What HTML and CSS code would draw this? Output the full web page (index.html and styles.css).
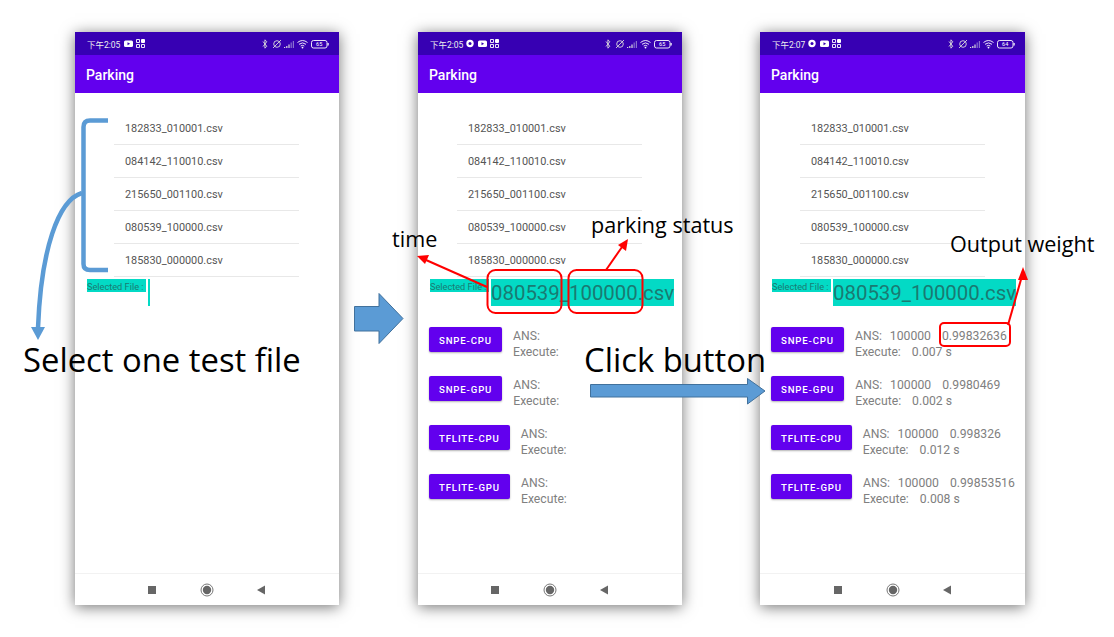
FILE: index.html
```html
<!DOCTYPE html>
<html lang="en">

<head>
    <meta charset="UTF-8">
    <meta name="viewport" content="width=device-width, initial-scale=1.0">
    <title>Parking</title>
    <link rel="stylesheet" href="styles.css">
</head>

<body>

    <div class="slide">

        <!-- first phone: nothing selected -->
        <div class="phone phone-one">
            <div class="status-bar">
                <span class="clock">下午2:05</span>
                <svg class="status-icon" width="23" height="9" viewBox="0 0 23 9">
                    <rect x="1" y="1.5" width="9" height="6.500" rx="1.500" fill="#fff" />
                    <path d="M4.500 3.200v3l2.600-1.500z" fill="#3700b3" />
                    <path d="M13.500 .5h3v3h-3zM13.500 5.500h3v3h-3zM18.500 5.500h3v3h-3z" fill="none" stroke="#fff" stroke-width=".9" />
                    <rect x="18" y="0" width="4" height="4" rx="1" fill="#fff" />
                </svg>
                <svg class="status-right" width="67" height="10" viewBox="0 0 67 10">
                    <path d="M1 2.500l3.800 4.800L2.900 9.200V.8l1.900 1.900L1 7.500" fill="none" stroke="#ddd" stroke-width=".9" />
                    <circle cx="15" cy="5" r="3.300" fill="none" stroke="#ddd" stroke-width=".9" />
                    <path d="M11 9l8-8" stroke="#ddd" stroke-width=".9" />
                    <path d="M22 9h1.200V8H22zM24.200 9h1.200V7h-1.200zM26.400 9h1.200V5.500h-1.200z" fill="#ddd" />
                    <path d="M28.600 9h1.200V3.500h-1.200zM30.800 9H32V2h-1.200z" fill="#8a70d0" />
                    <path d="M35.500 3.500q5-4 10 0M37 5.300q3.500-2.800 7 0M38.700 7q1.800-1.300 3.600 0" fill="none" stroke="#fff" stroke-width=".9" />
                    <circle cx="40.500" cy="8.600" r=".9" fill="#fff" />
                    <rect x="49.500" y="1.500" width="15.500" height="7.500" rx="2" fill="none" stroke="#fff" stroke-width=".9" />
                    <rect x="65.500" y="4" width="1.200" height="2.500" fill="#fff" />
                    <text x="57.200" y="7.300" text-anchor="middle" class="battery-text">65</text>
                </svg>
            </div>
            <div class="app-bar">Parking</div>
            <div class="content">
                <ul class="file-list">
                    <li>182833_010001.csv</li>
                    <li>084142_110010.csv</li>
                    <li>215650_001100.csv</li>
                    <li>080539_100000.csv</li>
                    <li>185830_000000.csv</li>
                </ul>
                <div class="selected-row">
                    <span class="selected-label">Selected File :</span>
                    <span class="selected-value"></span>
                </div>
            </div>
            <div class="nav-bar">
                <svg width="124" height="14" viewBox="0 0 124 14">
                    <rect x="3" y="3" width="8" height="8" fill="#666" />
                    <circle cx="62" cy="7" r="6" fill="none" stroke="#777" stroke-width="1" />
                    <circle cx="62" cy="7" r="4.200" fill="#666" />
                    <path d="M112 7l8-4.500v9z" fill="#666" />
                </svg>
            </div>
        </div>

        <!-- second phone: file selected, no results yet -->
        <div class="phone phone-two">
            <div class="status-bar">
                <span class="clock">下午2:05</span>
                <svg class="status-icon" width="34" height="9" viewBox="0 0 34 9">
                    <circle cx="4" cy="4.500" r="3.700" fill="#fff" />
                    <circle cx="4" cy="4.500" r="1.500" fill="#3700b3" />
                    <rect x="12" y="1.500" width="9" height="6.500" rx="1.500" fill="#fff" />
                    <path d="M15.500 3.200v3l2.600-1.500z" fill="#3700b3" />
                    <path d="M24.500 .5h3v3h-3zM24.500 5.500h3v3h-3zM29.500 5.500h3v3h-3z" fill="none" stroke="#fff" stroke-width=".9" />
                    <rect x="29" y="0" width="4" height="4" rx="1" fill="#fff" />
                </svg>
                <svg class="status-right" width="67" height="10" viewBox="0 0 67 10">
                    <path d="M1 2.500l3.800 4.800L2.900 9.200V.8l1.900 1.900L1 7.500" fill="none" stroke="#ddd" stroke-width=".9" />
                    <circle cx="15" cy="5" r="3.300" fill="none" stroke="#ddd" stroke-width=".9" />
                    <path d="M11 9l8-8" stroke="#ddd" stroke-width=".9" />
                    <path d="M22 9h1.200V8H22zM24.200 9h1.200V7h-1.200zM26.400 9h1.200V5.500h-1.200z" fill="#ddd" />
                    <path d="M28.600 9h1.200V3.500h-1.200zM30.800 9H32V2h-1.200z" fill="#8a70d0" />
                    <path d="M35.500 3.500q5-4 10 0M37 5.300q3.500-2.800 7 0M38.700 7q1.800-1.300 3.600 0" fill="none" stroke="#fff" stroke-width=".9" />
                    <circle cx="40.500" cy="8.600" r=".9" fill="#fff" />
                    <rect x="49.500" y="1.500" width="15.500" height="7.500" rx="2" fill="none" stroke="#fff" stroke-width=".9" />
                    <rect x="65.500" y="4" width="1.200" height="2.500" fill="#fff" />
                    <text x="57.200" y="7.300" text-anchor="middle" class="battery-text">65</text>
                </svg>
            </div>
            <div class="app-bar">Parking</div>
            <div class="content">
                <ul class="file-list">
                    <li>182833_010001.csv</li>
                    <li>084142_110010.csv</li>
                    <li>215650_001100.csv</li>
                    <li>080539_100000.csv</li>
                    <li>185830_000000.csv</li>
                </ul>
                <div class="selected-row">
                    <span class="selected-label">Selected File :</span>
                    <span class="selected-value">080539_100000.csv</span>
                </div>
                <div class="model-list">
                    <div class="model-row">
                        <button class="model-button">SNPE-CPU</button>
                        <div class="model-result">
                            <div>ANS:</div>
                            <div>Execute:</div>
                        </div>
                    </div>
                    <div class="model-row">
                        <button class="model-button">SNPE-GPU</button>
                        <div class="model-result">
                            <div>ANS:</div>
                            <div>Execute:</div>
                        </div>
                    </div>
                    <div class="model-row">
                        <button class="model-button">TFLITE-CPU</button>
                        <div class="model-result">
                            <div>ANS:</div>
                            <div>Execute:</div>
                        </div>
                    </div>
                    <div class="model-row">
                        <button class="model-button">TFLITE-GPU</button>
                        <div class="model-result">
                            <div>ANS:</div>
                            <div>Execute:</div>
                        </div>
                    </div>
                </div>
            </div>
            <div class="nav-bar">
                <svg width="124" height="14" viewBox="0 0 124 14">
                    <rect x="3" y="3" width="8" height="8" fill="#666" />
                    <circle cx="62" cy="7" r="6" fill="none" stroke="#777" stroke-width="1" />
                    <circle cx="62" cy="7" r="4.200" fill="#666" />
                    <path d="M112 7l8-4.500v9z" fill="#666" />
                </svg>
            </div>
        </div>

        <!-- third phone: results filled in -->
        <div class="phone phone-three">
            <div class="status-bar">
                <span class="clock">下午2:07</span>
                <svg class="status-icon" width="34" height="9" viewBox="0 0 34 9">
                    <circle cx="4" cy="4.500" r="3.700" fill="#fff" />
                    <circle cx="4" cy="4.500" r="1.500" fill="#3700b3" />
                    <rect x="12" y="1.500" width="9" height="6.500" rx="1.500" fill="#fff" />
                    <path d="M15.500 3.200v3l2.600-1.500z" fill="#3700b3" />
                    <path d="M24.500 .5h3v3h-3zM24.500 5.500h3v3h-3zM29.500 5.500h3v3h-3z" fill="none" stroke="#fff" stroke-width=".9" />
                    <rect x="29" y="0" width="4" height="4" rx="1" fill="#fff" />
                </svg>
                <svg class="status-right" width="67" height="10" viewBox="0 0 67 10">
                    <path d="M1 2.500l3.800 4.800L2.900 9.200V.8l1.900 1.900L1 7.500" fill="none" stroke="#ddd" stroke-width=".9" />
                    <circle cx="15" cy="5" r="3.300" fill="none" stroke="#ddd" stroke-width=".9" />
                    <path d="M11 9l8-8" stroke="#ddd" stroke-width=".9" />
                    <path d="M22 9h1.200V8H22zM24.200 9h1.200V7h-1.200zM26.400 9h1.200V5.500h-1.200z" fill="#ddd" />
                    <path d="M28.600 9h1.200V3.500h-1.200zM30.800 9H32V2h-1.200z" fill="#8a70d0" />
                    <path d="M35.500 3.500q5-4 10 0M37 5.300q3.500-2.800 7 0M38.700 7q1.800-1.300 3.600 0" fill="none" stroke="#fff" stroke-width=".9" />
                    <circle cx="40.500" cy="8.600" r=".9" fill="#fff" />
                    <rect x="49.500" y="1.500" width="15.500" height="7.500" rx="2" fill="none" stroke="#fff" stroke-width=".9" />
                    <rect x="65.500" y="4" width="1.200" height="2.500" fill="#fff" />
                    <text x="57.200" y="7.300" text-anchor="middle" class="battery-text">64</text>
                </svg>
            </div>
            <div class="app-bar">Parking</div>
            <div class="content">
                <ul class="file-list">
                    <li>182833_010001.csv</li>
                    <li>084142_110010.csv</li>
                    <li>215650_001100.csv</li>
                    <li>080539_100000.csv</li>
                    <li>185830_000000.csv</li>
                </ul>
                <div class="selected-row">
                    <span class="selected-label">Selected File :</span>
                    <span class="selected-value">080539_100000.csv</span>
                </div>
                <div class="model-list">
                    <div class="model-row">
                        <button class="model-button">SNPE-CPU</button>
                        <div class="model-result">
                            <div>ANS:<span class="ans">100000</span><span class="weight">0.99832636</span></div>
                            <div>Execute:<span class="time">0.007 s</span></div>
                        </div>
                    </div>
                    <div class="model-row">
                        <button class="model-button">SNPE-GPU</button>
                        <div class="model-result">
                            <div>ANS:<span class="ans">100000</span><span class="weight">0.9980469</span></div>
                            <div>Execute:<span class="time">0.002 s</span></div>
                        </div>
                    </div>
                    <div class="model-row">
                        <button class="model-button">TFLITE-CPU</button>
                        <div class="model-result">
                            <div>ANS:<span class="ans">100000</span><span class="weight">0.998326</span></div>
                            <div>Execute:<span class="time">0.012 s</span></div>
                        </div>
                    </div>
                    <div class="model-row">
                        <button class="model-button">TFLITE-GPU</button>
                        <div class="model-result">
                            <div>ANS:<span class="ans">100000</span><span class="weight">0.99853516</span></div>
                            <div>Execute:<span class="time">0.008 s</span></div>
                        </div>
                    </div>
                </div>
            </div>
            <div class="nav-bar">
                <svg width="124" height="14" viewBox="0 0 124 14">
                    <rect x="3" y="3" width="8" height="8" fill="#666" />
                    <circle cx="62" cy="7" r="6" fill="none" stroke="#777" stroke-width="1" />
                    <circle cx="62" cy="7" r="4.200" fill="#666" />
                    <path d="M112 7l8-4.500v9z" fill="#666" />
                </svg>
            </div>
        </div>

        <!-- slide annotations drawn over the phones -->
        <svg class="overlay" width="1114" height="637" viewBox="0 0 1114 637">
            <path d="M108 120.500H90q-6.500 0-6.500 6.500v137q0 6 6.500 6h18" fill="none" stroke="#5b9bd5" stroke-width="4.500" />
            <path d="M82 193C58 200 41 250 38 328" fill="none" stroke="#5b9bd5" stroke-width="4.500" />
            <path d="M31 327h14l-7 13z" fill="#5b9bd5" />

            <path d="M354.500 306.500h24.500v-13l24 25-24 25v-12.500h-24.500z" fill="#5b9bd5" stroke="#41719c" />
            <path d="M590.500 384.500h157v-6l17.500 12.500-17.500 13v-7h-157z" fill="#5b9bd5" stroke="#41719c" />

            <rect x="487.500" y="270" width="74" height="43" rx="8" class="red-box" />
            <rect x="568.500" y="270" width="74" height="43" rx="8" class="red-box" />
            <rect x="940" y="323" width="70" height="23" rx="4" class="red-box" />

            <path d="M487 287L426 260" class="red-line" />
            <path d="M417 256l12-1-4 9z" fill="#f00" />
            <path d="M606 270L622 247" class="red-line" />
            <path d="M628 239l-2 12-8-6z" fill="#f00" />
            <path d="M1008 325L1022 276" class="red-line" />
            <path d="M1023 267l5 13h-10z" fill="#f00" />
        </svg>

        <div class="note note-select">Select one test file</div>
        <div class="note note-click">Click button</div>
        <div class="note-small note-time">time</div>
        <div class="note-small note-status">parking status</div>
        <div class="note-small note-weight">Output weight</div>
    </div>

</body>

</html>
```

FILE: styles.css
```css
body {
    margin: 0;
    background-color: #fff;
    font-family: Roboto, Arial, sans-serif;
}

.slide {
    position: relative;
    width: 1114px;
    height: 637px;
    overflow: hidden;
}

/* phones sit on the slide like windows on a desktop */
.phone {
    position: absolute;
    top: 32px;
    width: 264px;
    height: 573px;
    display: flex;
    flex-direction: column;
    background: #fff;
    box-shadow: 0 2px 14px rgba(0, 0, 0, 0.55);
}

.phone-one {
    left: 75px;
}

.phone-two {
    left: 418px;
}

.phone-three {
    left: 760px;
    width: 265px;
}

.status-bar {
    height: 23px;
    display: flex;
    align-items: center;
    gap: 3px;
    padding: 0 10px 0 12px;
    background-color: #3700b3;
    color: #eee;
}

.clock {
    font-family: Roboto, "Noto Sans CJK SC", sans-serif;
    font-size: 8.5px;
}

.status-right {
    margin-left: auto;
}

.battery-text {
    font-family: Roboto, sans-serif;
    font-size: 5.5px;
    fill: #fff;
}

.app-bar {
    height: 36px;
    display: flex;
    align-items: center;
    padding: 2px 0 0 11px;
    background-color: #6200ee;
    color: #fff;
    font-size: 14px;
    font-weight: 500;
}

.content {
    flex: 1;
    padding-top: 19px;
}

.file-list {
    list-style: none;
    width: 185px;
    margin: 0 0 0 39px;
    padding: 0;
}

.phone-three .file-list {
    margin-left: 40px;
}

.file-list li {
    height: 32px;
    line-height: 34px;
    padding-left: 11px;
    border-bottom: 1px solid #e8e8e8;
    color: #555;
    font-size: 10.9px;
}

.selected-row {
    display: flex;
    align-items: flex-start;
    gap: 2px;
    margin: 2px 0 0 12px;
}

.selected-label {
    height: 13px;
    line-height: 15px;
    width: 59px;
    white-space: nowrap;
    background-color: #03dac5;
    color: #1a7a72;
    font-size: 9.2px;
}

.selected-value {
    min-width: 2px;
    height: 27px;
    line-height: 29px;
    background-color: #03dac5;
    color: #1a7a72;
    font-size: 20.4px;
}

.model-list {
    display: flex;
    flex-direction: column;
    gap: 16px;
    margin: 21px 0 0 11px;
}

.model-row {
    display: flex;
    align-items: flex-start;
    gap: 11px;
}

.model-button {
    height: 25px;
    padding: 2px 10px 0;
    border: none;
    border-radius: 2px;
    background-color: #6200ee;
    color: #fff;
    font-family: Roboto, sans-serif;
    font-size: 9.6px;
    font-weight: 500;
    letter-spacing: 0.09em;
    box-shadow: 0 1px 2px rgba(0, 0, 0, 0.3);
}

.model-result {
    padding-top: 1px;
    color: #808080;
    font-size: 12.2px;
    line-height: 16px;
    white-space: nowrap;
}

.ans {
    margin-left: 8px;
}

.weight {
    margin-left: 11px;
}

.time {
    margin-left: 11px;
}

.nav-bar {
    height: 31px;
    display: flex;
    align-items: center;
    justify-content: center;
    border-top: 1px solid #f2f2f2;
}

/* annotations */
.overlay {
    position: absolute;
    left: 0;
    top: 0;
    pointer-events: none;
}

.red-box {
    fill: none;
    stroke: #f00;
    stroke-width: 2;
}

.red-line {
    fill: none;
    stroke: #f00;
    stroke-width: 2;
}

.note,
.note-small {
    position: absolute;
    color: #000;
    font-family: "Open Sans", sans-serif;
    white-space: nowrap;
}

.note {
    font-size: 32.8px;
    line-height: 40px;
}

.note-small {
    font-size: 21.6px;
    line-height: 28px;
}

.note-select {
    left: 23px;
    top: 340px;
}

.note-click {
    left: 584px;
    top: 340px;
}

.note-time {
    left: 392px;
    top: 225px;
}

.note-status {
    left: 591px;
    top: 211px;
}

.note-weight {
    left: 950px;
    top: 230px;
}
```
